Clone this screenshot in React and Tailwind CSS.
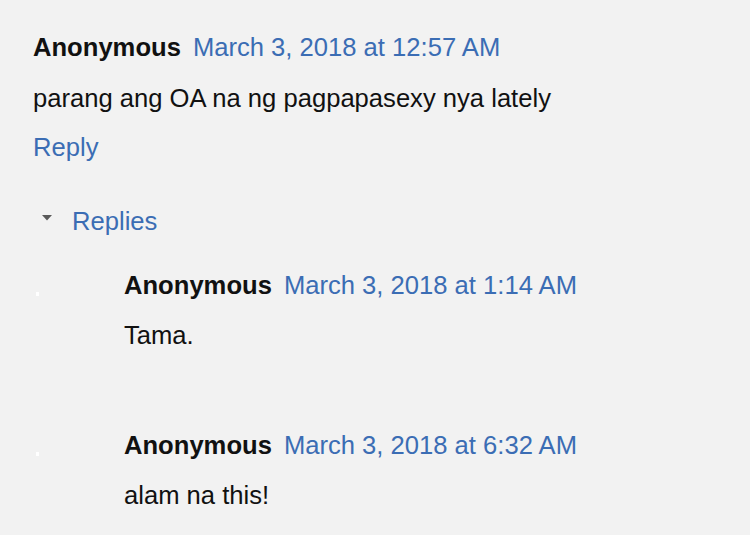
export default function App() {
  const font = { fontFamily: '"Liberation Sans", Arial, sans-serif' };
  const Header = ({ date }) => (
    <div className="h-[50px] leading-[50px] whitespace-nowrap">
      <span className="font-bold text-[#111]">Anonymous</span>
      <span className="ml-[12px] text-[#3b6db4]">{date}</span>
    </div>
  );
  const ReplyItem = ({ date, text, className }) => (
    <div className={"flex " + className}>
      <div className="w-[91px] shrink-0 pl-[3px] pt-[32px]">
        <div className="w-[3px] h-[4px] bg-white"></div>
      </div>
      <div>
        <Header date={date} />
        <div className="h-[50px] leading-[50px] text-[#111]">{text}</div>
      </div>
    </div>
  );
  return (
    <div
      className="min-h-[535px] w-[750px] bg-[#f2f2f2] pt-[22px] pl-[33px] text-[25.6px] overflow-hidden"
      style={font}
    >
      <Header date="March 3, 2018 at 12:57 AM" />
      <div className="mt-[1px] h-[50px] leading-[50px] text-[#111]">
        parang ang OA na ng pagpapasexy nya lately
      </div>
      <div className="h-[48px] leading-[48px] text-[#3b6db4]">Reply</div>
      <div className="mt-[25px] h-[50px] flex items-center pl-[9px]">
        <svg width="10" height="6" viewBox="0 0 10 6" className="mr-[20px] -mt-[6px]">
          <path d="M0 0 L10 0 L5 5.5 Z" fill="#5a5a5a" />
        </svg>
        <span className="leading-[50px] text-[#3b6db4]">Replies</span>
      </div>
      <ReplyItem className="mt-[14px]" date="March 3, 2018 at 1:14 AM" text="Tama." />
      <ReplyItem className="mt-[60px]" date="March 3, 2018 at 6:32 AM" text="alam na this!" />
    </div>
  );
}
